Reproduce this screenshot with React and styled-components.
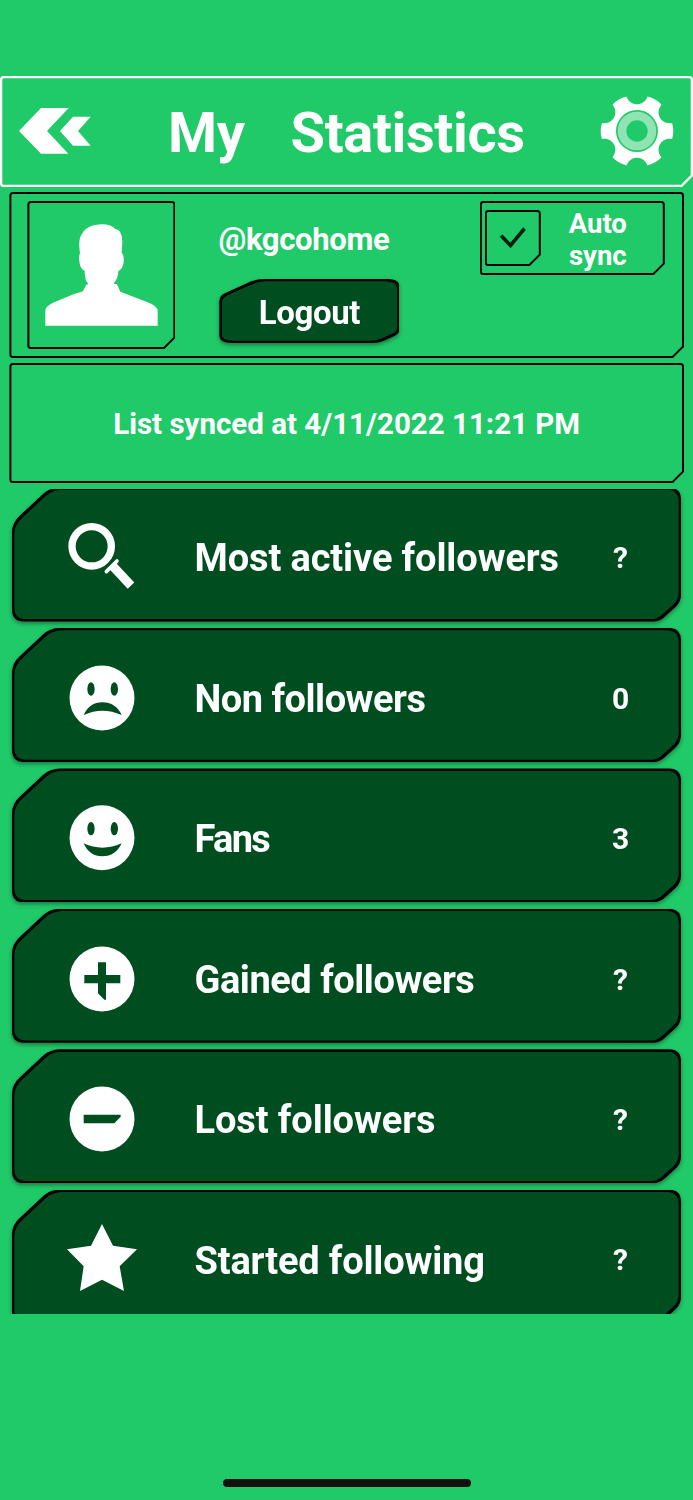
import styled, { createGlobalStyle } from "styled-components"

const GREEN = "#21ca69"
const DARK = "#004d20"

// thin outline with the bottom right corner cut off
const frame = (w, h, t = 2, cut = 11) => {
    const shape = (x, y, r, b, rad, c) =>
        `M${x + rad},${y} H${r - rad} Q${r},${y} ${r},${y + rad} V${b - c} L${r - c},${b} H${x + rad} Q${x},${b} ${x},${b - rad} V${y + rad} Q${x},${y} ${x + rad},${y} Z`
    return `${shape(0, 0, w, h, 3.5, cut)} ${shape(t, t, w - t, h - t, 1.5, cut - t * 0.6)}`
}

const rowShape = (w, h) =>
    `M0,45 Q0,35 8,28 L31,6.5 Q38,0 48,0 H${w - 12} Q${w},0 ${w},12 V${h - 27} Q${w},${h - 20} ${w - 5},${h - 15} L${w - 16},${h - 5} Q${w - 21},${h} ${w - 28},${h} H12 Q0,${h} 0,${h - 12} Z`

const buttonShape = (w, h) =>
    `M0,22 Q0,16.5 6,14 L28,4 Q36,0 45,0 H${w - 12} Q${w},0 ${w},7 V${h - 13} Q${w},${h - 9} ${w - 5},${h - 7} L${w - 15},${h - 2.5} Q${w - 20},${h} ${w - 28},${h} H12 Q0,${h} 0,${h - 7} Z`

const gearPath = () => {
    const at = (r, deg) => {
        const a = (deg * Math.PI) / 180
        return `${(r * Math.cos(a)).toFixed(2)},${(r * Math.sin(a)).toFixed(2)}`
    }
    let d = ""
    for (let a = 0; a < 360; a += 60) {
        d += `${a ? "L" : "M"}${at(36, a - 13)} Q${at(37.5, a)} ${at(36, a + 13)} C${at(25, a + 14)} ${at(25, a + 46)} ${at(36, a + 47)} `
    }
    return d + "Z M21,0 A21,21 0 1 0 -21,0 A21,21 0 1 0 21,0 Z"
}

const BackIcon = () => (
    <svg width="72" height="46" viewBox="58 114 216 138" fill="#fff">
        <path d="M58,183 L124,114 H207 L142,183 L206,251 H124 Z" />
        <path d="M181,183 L220,140 H273 L235,183 L273,227 H220 Z" />
    </svg>
)

const GearIcon = () => (
    <svg width="76" height="76" viewBox="-38 -38 76 76">
        <path d={gearPath()} fill="#fff" fillRule="evenodd" />
        <circle r="15" fill="none" stroke="#90e4b4" strokeWidth="8.6" />
    </svg>
)

const PersonIcon = () => (
    <svg width="113" height="102" viewBox="136 117 339 306" fill="#fff">
        <path d="M137,422 V378 Q137,364 160,353 L225,326 Q245,322 250,318 L260,299 Q269,298 264,294 Q255,285 255,257 Q243,254 240,235 Q236,215 241,205 Q235,165 245,150 Q260,118 308,118 Q335,118 347,132 Q368,134 368,170 L366,203 Q374,210 372,232 Q368,255 356,258 Q355,282 343,293 Q340,298 352,298 L362,320 L440,350 Q474,362 474,378 V422 Z" />
    </svg>
)

const CheckIcon = () => (
    <svg width="28" height="22" viewBox="0 0 28 22">
        <path d="M2,8.5 L11.5,18.5 L25.5,1.5" fill="none" stroke="#04200f" strokeWidth="3.6" />
    </svg>
)

const SearchIcon = () => (
    <svg width="72" height="72" viewBox="197 123 216 216" fill="none" stroke="#fff">
        <circle cx="274" cy="199" r="59" strokeWidth="22" />
        <path d="M318,275 L350,243" strokeWidth="11" strokeLinecap="round" />
        <path d="M336,257 L392,317" strokeWidth="27" />
    </svg>
)

const SadIcon = () => (
    <svg width="72" height="72" viewBox="47 34 216 216" fill={DARK}>
        <circle cx="155" cy="142" r="97.5" fill="#fff" />
        <ellipse cx="122" cy="115" rx="11" ry="20" />
        <ellipse cx="192" cy="115" rx="11" ry="20" />
        <path d="M100,193 Q117,155 156,155 Q196,155 214,193 Q156,167 100,193 Z" />
    </svg>
)

const SmileIcon = () => (
    <svg width="72" height="72" viewBox="47 456 216 216" fill={DARK}>
        <circle cx="155" cy="563" r="97.5" fill="#fff" />
        <ellipse cx="122" cy="536" rx="11" ry="20" />
        <ellipse cx="192" cy="536" rx="11" ry="20" />
        <path d="M100,580 Q156,606 214,580 Q196,619 156,619 Q117,619 100,580 Z" />
    </svg>
)

const PlusIcon = () => (
    <svg width="72" height="72" viewBox="47 36 216 216" fill={DARK}>
        <circle cx="155" cy="144" r="97.5" fill="#fff" />
        <path d="M143,94 H167 V132 H210 V157 H167 V206 H162 L143,187 V157 H102 V132 H143 Z" />
    </svg>
)

const MinusIcon = () => (
    <svg width="72" height="72" viewBox="47 458 216 216" fill={DARK}>
        <circle cx="155" cy="566" r="97.5" fill="#fff" />
        <path d="M100,553 H211 V559 L192,579 H100 Z" />
    </svg>
)

const StarIcon = () => (
    <svg width="72" height="72" viewBox="197 131 216 216" fill="#fff">
        <path d="M305,134 L338,199 L410,210 L358,261 L371,335 L305,301 L239,335 L250,261 L200,210 L272,199 Z" />
    </svg>
)

const rows = [
    { name: "Most active followers", value: "?", icon: <SearchIcon />, spacing: "-0.12px" },
    { name: "Non followers", value: "0", icon: <SadIcon />, spacing: "-0.5px" },
    { name: "Fans", value: "3", icon: <SmileIcon />, spacing: "-1.7px" },
    { name: "Gained followers", value: "?", icon: <PlusIcon />, spacing: "-0.47px" },
    { name: "Lost followers", value: "?", icon: <MinusIcon />, spacing: "-0.1px" },
    { name: "Started following", value: "?", icon: <StarIcon />, spacing: "-0.18px" },
]

const App = () => {
    return (
        <Screen>
            <GlobalStyle />
            <Header>
                <BackIcon />
                <Title>
                    <span>My</span>
                    <span>Statistics</span>
                </Title>
                <GearIcon />
            </Header>
            <Profile>
                <Avatar>
                    <PersonIcon />
                </Avatar>
                <Account>
                    <Username>@kgcohome</Username>
                    <Logout>
                        <span>Logout</span>
                    </Logout>
                </Account>
                <AutoSync>
                    <Checkbox>
                        <CheckIcon />
                    </Checkbox>
                    <SyncLabel>
                        Auto
                        <br />
                        sync
                    </SyncLabel>
                </AutoSync>
            </Profile>
            <SyncStatus>
                <span>List synced at 4/11/2022 11:21 PM</span>
            </SyncStatus>
            <List>
                {
                    rows.map(({ name, value, icon, spacing }) => {
                        return (
                            <Row key={name}>
                                {icon}
                                <RowLabel $spacing={spacing}>{name}</RowLabel>
                                <RowValue>{value}</RowValue>
                            </Row>
                        )
                    })
                }
            </List>
            <HomeBar />
        </Screen>
    )
}

const GlobalStyle = createGlobalStyle`
    * {
        box-sizing: border-box;
    }
    body {
        margin: 0;
        background: ${GREEN};
    }
    svg {
        display: block;
        flex: none;
    }
`

const Screen = styled.div`
    width: 693px;
    height: 1500px;
    padding-top: 76px;
    display: flex;
    flex-direction: column;
    overflow: hidden;
    background: ${GREEN};
    color: #fff;
    font-family: Roboto, "Liberation Sans", sans-serif;
    font-weight: 700;
    white-space: nowrap;
`

const Framed = styled.div`
    position: relative;
    width: ${({ $w }) => $w}px;
    height: ${({ $h }) => $h}px;
    flex: none;
    display: flex;
    &::before {
        content: "";
        position: absolute;
        inset: 0;
        background: ${({ $line }) => $line || "#000"};
        clip-path: path(evenodd, "${({ $w, $h, $t }) => frame($w, $h, $t)}");
        pointer-events: none;
    }
`

const Header = styled(Framed).attrs({ as: "header", $w: 693, $h: 111, $t: 2.3, $line: "#fff" })`
    align-items: center;
    padding: 0 18px 1px 19px;
`

const Title = styled.h1`
    flex: 1;
    display: flex;
    gap: 46px;
    margin: 0;
    padding: 4px 0 0 77px;
    font-size: 56px;
    line-height: 60px;
    letter-spacing: -0.35px;
`

const Profile = styled(Framed).attrs({ as: "section", $w: 674.6, $h: 166 })`
    margin: 5px 0 0 9.4px;
    padding: 9px 18px;
    align-items: flex-start;
`

const Avatar = styled(Framed).attrs({ $w: 148, $h: 148 })`
    justify-content: center;
    padding-top: 23px;
`

const Account = styled.div`
    margin-left: 44px;
    width: 262px;
`

const Username = styled.div`
    padding-top: 19px;
    margin-left: -1px;
    font-size: 31px;
    line-height: 40px;
    letter-spacing: -0.3px;
`

const Shaped = styled.div`
    position: relative;
    width: ${({ $w }) => $w}px;
    height: ${({ $h }) => $h}px;
    flex: none;
    display: flex;
    align-items: center;
    isolation: isolate;
    filter: drop-shadow(0 2px 2px rgba(0, 0, 0, 0.4));
    &::before,
    &::after {
        content: "";
        position: absolute;
        z-index: -1;
    }
    &::before {
        inset: 0;
        background: #000;
        clip-path: path("${({ $w, $h, $shape }) => $shape($w, $h)}");
    }
    &::after {
        inset: 2.3px;
        background: ${DARK};
        clip-path: path("${({ $w, $h, $shape }) => $shape($w - 4.6, $h - 4.6)}");
    }
`

const Logout = styled(Shaped).attrs({ as: "button", $w: 180, $h: 64, $shape: buttonShape })`
    margin-top: 19px;
    padding: 4px 0 0;
    border: 0;
    justify-content: center;
    background: none;
    color: #fff;
    font: 700 33px/40px Roboto, "Liberation Sans", sans-serif;
    letter-spacing: -0.4px;
`

const AutoSync = styled(Framed).attrs({ $w: 185, $h: 74 })`
    margin-left: -1.6px;
    padding: 9px 5px;
`

const Checkbox = styled(Framed).attrs({ $w: 56, $h: 56 })`
    align-items: center;
    justify-content: center;
`

const SyncLabel = styled.div`
    width: 114px;
    text-align: center;
    font-size: 27.5px;
    line-height: 31.5px;
    margin-top: -2px;
`

const SyncStatus = styled(Framed).attrs({ as: "section", $w: 674.6, $h: 120 })`
    margin: 5px 0 0 9.4px;
    padding-top: 1px;
    align-items: center;
    justify-content: center;
    font-size: 29.5px;
`

const List = styled.div`
    display: flex;
    flex-direction: column;
    gap: 6.45px;
    height: 825px;
    flex: none;
    margin-top: 6px;
    padding-left: 12px;
    overflow: hidden;
    > :first-child {
        margin-top: -1.5px;
    }
`

const Row = styled(Shaped).attrs({ $w: 669, $h: 134, $shape: rowShape })`
    padding: 5.6px 0 0 53.5px;
`

const RowLabel = styled.div`
    width: 400px;
    margin: 2.4px 0 0 57px;
    font-size: 38px;
    letter-spacing: ${({ $spacing }) => $spacing};
`

const RowValue = styled.div`
    width: 52px;
    margin-top: 1px;
    text-align: center;
    font-size: 30px;
    font-weight: 700;
`

const HomeBar = styled.div`
    width: 248px;
    height: 8px;
    margin: auto auto 13px 223px;
    border-radius: 4px;
    background: #111;
`

export default App
